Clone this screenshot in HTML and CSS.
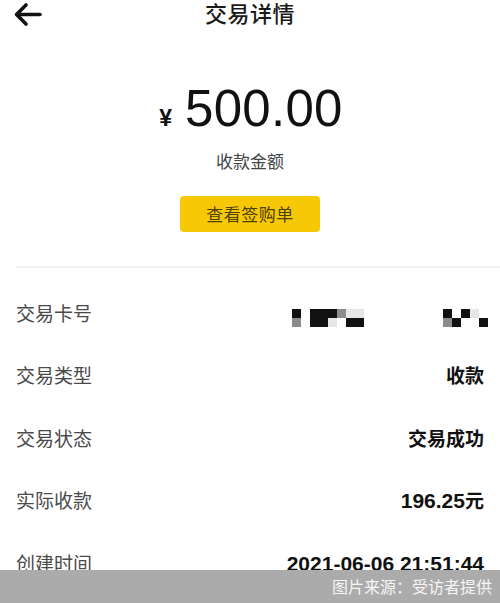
FILE: index.html
```html
<!DOCTYPE html>
<html lang="zh">
<head>
<meta charset="utf-8">
<title>交易详情</title>
<link rel="stylesheet" href="styles.css">
</head>
<body>
<div class="page">
  <header class="topbar">
    <div class="back">
      <svg width="30" height="28" viewBox="0 0 30 28"><path d="M28 14.5H5 M14 5 L4.5 14.5 L14 24" fill="none" stroke="#111" stroke-width="3.6" stroke-linecap="round" stroke-linejoin="round"/></svg>
    </div>
    <h1 class="title">交易详情</h1>
    <div></div>
  </header>

  <section class="summary">
    <div class="amount"><span class="yen">¥</span><span class="num">500.00</span></div>
    <div class="amount-label">收款金额</div>
    <div class="btn">查看签购单</div>
  </section>

  <div class="divider"></div>

  <ul class="rows">
    <li class="row">
      <span class="label">交易卡号</span>
      <span class="mask">
        <span class="blk blk-a">
          <i class="k"></i><i class="w"></i><i class="k"></i><i class="k"></i><i class="k"></i><i class="g"></i><i class="l"></i><i class="l"></i>
          <i class="g"></i><i class="w"></i><i class="k"></i><i class="k"></i><i class="l"></i><i class="w"></i><i class="k"></i><i class="k"></i>
        </span>
        <span class="blk blk-b">
          <i class="k"></i><i class="w"></i><i class="k"></i><i class="l"></i><i class="w"></i>
          <i class="g"></i><i class="k"></i><i class="w"></i><i class="w"></i><i class="k"></i>
        </span>
      </span>
    </li>
    <li class="row"><span class="label">交易类型</span><span class="value">收款</span></li>
    <li class="row"><span class="label">交易状态</span><span class="value">交易成功</span></li>
    <li class="row"><span class="label">实际收款</span><span class="value"><span class="dig">196.25</span>元</span></li>
    <li class="row"><span class="label">创建时间</span><span class="value"><span class="dig">2021-06-06 21:51:44</span></span></li>
  </ul>

  <div class="credit">图片来源：受访者提供</div>
</div>
</body>
</html>
```

FILE: styles.css
```css
* { box-sizing: border-box; }
html, body { margin: 0; padding: 0; background: #fff; }
body {
  font-family: "Noto Sans CJK SC", "Liberation Sans", sans-serif;
  color: #111;
}
.page {
  position: relative;
  width: 500px;
  height: 603px;
  overflow: hidden;
}
.topbar {
  display: grid;
  grid-template-columns: 1fr auto 1fr;
  align-items: start;
  height: 28px;
}
.back {
  padding-left: 12px;
  display: flex;
  align-items: center;
}
.back svg { display: block; }
.title {
  margin: 0;
  font-size: 22px;
  font-weight: 500;
  line-height: 22px;
  padding-top: 1px;
  letter-spacing: 0.5px;
  color: #1a1a1a;
}
.summary {
  display: flex;
  flex-direction: column;
  align-items: center;
  padding-top: 56px;
}
.amount {
  display: flex;
  align-items: baseline;
  gap: 13px;
  line-height: 50px;
  height: 50px;
  margin-left: 2px;
}
.yen {
  font-family: "Liberation Sans", sans-serif;
  font-size: 23px;
  font-weight: 700;
}
.num {
  font-family: "Liberation Sans", sans-serif;
  font-size: 51px;
  font-weight: 400;
  color: #111;
  letter-spacing: 0.3px;
}
.amount-label {
  margin-top: 15px;
  font-size: 17px;
  line-height: 24px;
  color: #444;
}
.btn {
  margin-top: 23px;
  width: 140px;
  height: 36px;
  border-radius: 4px;
  background: #f7c805;
  color: #4e4000;
  font-size: 17px;
  line-height: 36px;
  text-align: center;
  letter-spacing: 0.5px;
}
.divider {
  margin-top: 34px;
  margin-left: 16px;
  height: 2px;
  background: #f1f1f1;
}
.rows {
  list-style: none;
  margin: 13px 0 0;
  padding: 0 16px;
}
.row {
  display: flex;
  justify-content: space-between;
  align-items: center;
  height: 62.5px;
}
.label {
  font-size: 19px;
  color: #4a4a4a;
}
.value {
  font-size: 19px;
  font-weight: 700;
  color: #111;
}
.dig {
  font-family: "Liberation Sans", sans-serif;
  font-size: 21px;
  font-weight: 700;
}
.mask {
  display: flex;
  align-items: center;
  gap: 79px;
  margin-top: 12px;
  margin-right: -4px;
}
.blk {
  display: grid;
  grid-auto-rows: 9px;
}
.blk-a { grid-template-columns: repeat(8, 9px); }
.blk-b { grid-template-columns: repeat(5, 9px); }
.blk i { display: block; }
.blk .k { background: #111; }
.blk .g { background: #8c8c8c; }
.blk .l { background: #e6e6e6; }
.blk .w { background: #fff; }
.credit {
  position: absolute;
  left: 0;
  right: 0;
  bottom: 0;
  height: 33px;
  background: #ababab;
  color: #f5f5f5;
  font-size: 16px;
  line-height: 33px;
  text-align: right;
  padding-right: 8px;
}
```
